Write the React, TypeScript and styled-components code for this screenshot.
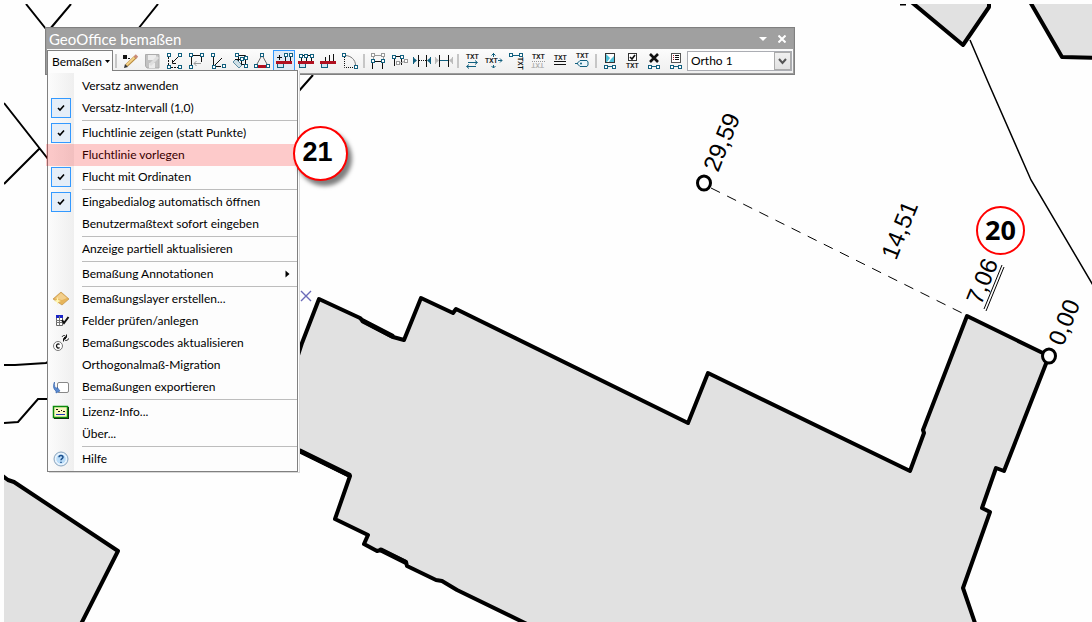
import React from "react";
import styled, { createGlobalStyle, css } from "styled-components";

const TEAL = "#12607f";
const RED = "#b01020";
const UI_FONT = '"Segoe UI", Lato, "Open Sans", sans-serif';

const GlobalStyle = createGlobalStyle`
  *, *::before, *::after { box-sizing: border-box; }
  body { margin: 0; background: #fefefe; color: #000; font-family: ${UI_FONT}; font-size: 12px; }
  button, select, input { font: inherit; color: inherit; }
`;

/* ---------- Map ---------- */

const Desktop = styled.main`
  position: relative;
  min-height: 100vh;
  padding: 4px 0 0 4px;
  overflow: hidden;
`;

const MapCanvas = styled.svg`
  display: block;
  width: 100%;
  height: calc(100vh - 4px);
`;

const Building = styled.path`
  fill: #e1e1e1;
  stroke: #000;
  stroke-width: 4;
  stroke-linejoin: round;
`;

const Boundary = styled.path<{ $w?: number }>`
  fill: none;
  stroke: #000;
  stroke-width: ${(p) => p.$w ?? 2};
`;

const Measure = styled.text`
  font-family: "Liberation Sans", Arial, sans-serif;
  font-size: 24px;
`;

type Label = { text: string; x: number; y: number };
const labels: Label[] = [
  { text: "29,59", x: 718, y: 173 },
  { text: "14,51", x: 896, y: 261 },
  { text: "7,06", x: 981, y: 306 },
  { text: "0,00", x: 1063, y: 347 },
];

const SiteMap = () => (
  <MapCanvas role="img" aria-label="Lageplan">
    <g transform="translate(-4 -4)">
      <Boundary d="M26 4 46 29M71 4 50 29M158 4 138 29M313 75 298 92M4 103 48 159M39 149 4 184M4 365H15L46 363 50 361M4 423 18 422 38 399H50" />
      <Boundary $w={1.5} d="M970 40 988 82 1031 180 1100 297" />
      <Building d="M909 0 963 45 989 7V0" />
      <Building d="M1029 0 1062 57 1100 58V0Z" />
      <Boundary $w={3} d="M900 4H906" />
      <Building d="M0 474 8 480 14 482 118 551 80 626H0Z" />
      <Building d="M290 380 302 343 319 299 360 318 363 321 393 337 404 340 421 298 453 313 456 309 688 423 708 373 910 471 924 433 923 430 967 316 1049 356 1004 471 996 468 982 508 990 512 963 588 976 626H531L457 590 442 581 436 580 407 566 406 562 381 550 377 551 364 544 368 535 335 519 350 476 290 446Z" />
      <Boundary $w={5} strokeLinecap="round" d="M300 451 349 475M381 550 405 562M363 321 392 336" />
      <Boundary $w={1} strokeDasharray="10 8" d="M711 188 966 315" />
      <Boundary $w={1} d="M984 309 1002 265M986 311 1004 267" />
      <path d="M301 291 311 301M311 291 301 301" stroke="#6a6ab8" strokeWidth="1.4" />
      <ellipse cx="704" cy="183" rx="6.5" ry="7" fill="#fefefe" stroke="#000" strokeWidth="3" />
      <ellipse cx="1049" cy="356" rx="6.5" ry="7" fill="#fefefe" stroke="#000" strokeWidth="3" />
      {labels.map((l) => (
        <Measure key={l.text} transform={`translate(${l.x} ${l.y}) rotate(-68)`}>
          {l.text}
        </Measure>
      ))}
    </g>
  </MapCanvas>
);

const Callout = styled.div<{ $x: number; $y: number; $size: number; $raised?: boolean }>`
  position: absolute;
  z-index: 2;
  left: ${(p) => p.$x}px;
  top: ${(p) => p.$y}px;
  width: ${(p) => p.$size}px;
  height: ${(p) => p.$size}px;
  display: flex;
  align-items: center;
  justify-content: center;
  padding-bottom: 3px;
  border: 2px solid #f00;
  border-radius: 50%;
  background: #fff;
  font: bold 27px/1 ${(p) => (p.$raised ? '"Liberation Sans", Arial' : '"Open Sans"')}, sans-serif;
  ${(p) =>
    p.$raised &&
    css`
      padding-right: 6px;
      box-shadow: 4px 5px 4px rgba(0, 0, 0, 0.5);
    `}
`;

/* ---------- Floating toolbar ---------- */

const ToolWindow = styled.section`
  position: absolute;
  z-index: 1;
  left: 45px;
  top: 27px;
  border: 1px solid #808080;
  padding: 1px;
  background: #9c9c9c;
`;

const TitleBar = styled.header`
  display: flex;
  align-items: center;
  justify-content: space-between;
  height: 20px;
  padding: 0 3px 0 2px;
  background: #a0a0a0;
  color: #fff;
`;

const Title = styled.h1`
  margin: 0;
  font-size: 15px;
  line-height: 20px;
  font-weight: 400;
`;

const TitleButtons = styled.div`
  display: flex;
  gap: 3px;
`;

const TitleButton = styled.button`
  display: flex;
  align-items: center;
  justify-content: center;
  width: 16px;
  height: 16px;
  padding: 0;
  border: 0;
  background: none;
`;

const Toolbar = styled.div`
  display: flex;
  align-items: center;
  height: 24px;
  background: linear-gradient(#fcfcfc, #efefef);
`;

const Tool = styled.button<{ $active?: boolean }>`
  display: flex;
  align-items: center;
  justify-content: center;
  width: 22px;
  height: 22px;
  padding: 0;
  border: 1px solid ${(p) => (p.$active ? "#3399ff" : "transparent")};
  background: ${(p) => (p.$active ? "#dfeaf6" : "none")};
`;

const Divider = styled.span`
  width: 2px;
  height: 14px;
  margin: 0 2px;
  background: #c6c6c6;
`;

const MenuAnchor = styled.div`
  position: relative;
  width: 66px;
  height: 22px;
`;

const MenuButton = styled.button`
  position: relative;
  z-index: 2;
  display: flex;
  align-items: center;
  justify-content: space-between;
  width: 100%;
  height: 21px;
  padding: 0 2px 0 4px;
  border: 1px solid #808080;
  border-bottom: 0;
  background: #fdfdfd;
  white-space: nowrap;
`;

const Combo = styled.div`
  position: relative;
  display: flex;
  width: 105px;
  height: 20px;
  margin-right: 1px;
  border: 1px solid #abadb3;
  background: #fff;
`;

const ComboSelect = styled.select`
  appearance: none;
  width: 100%;
  padding: 0 20px 0 3px;
  border: 0;
  background: #fff;
  line-height: 18px;
`;

const ComboArrow = styled.span`
  position: absolute;
  right: 0;
  top: 0;
  display: flex;
  align-items: center;
  justify-content: center;
  width: 17px;
  height: 18px;
  border: 1px solid #ababab;
  background: linear-gradient(#f0f0f0, #e2e2e2);
  pointer-events: none;
`;

const IconSvg = styled.svg`
  display: block;
  flex: none;
  overflow: visible;
`;

const TinyText = styled.text`
  font: 7px "Liberation Mono", monospace;
  stroke: currentColor;
  stroke-width: 0.2;
`;

/* ---------- Menu ---------- */

const Menu = styled.ul`
  position: absolute;
  z-index: 1;
  left: 0;
  top: 20px;
  width: 251px;
  margin: 0;
  padding: 4px 0 1px;
  border: 1px solid #808080;
  background: linear-gradient(90deg, #fcfcfc, #efefef) 0 2px / 26px 100% no-repeat, #fdfdfd;
  box-shadow: 1px 0 0 #fefefe, 2px 1px 0 #d8d8d8;
  list-style: none;
`;

const MenuItem = styled.li<{ $marked?: boolean }>`
  position: relative;
  ${(p) =>
    p.$marked &&
    css`
      &::after {
        content: "";
        position: absolute;
        inset: 0 0 0 -2px;
        background: rgba(255, 0, 0, 0.2);
        pointer-events: none;
      }
    `}
`;

const rowStyle = css`
  display: grid;
  grid-template-columns: 26px 1fr auto;
  column-gap: 8px;
  align-items: center;
  width: 100%;
  height: 22px;
  padding: 0 7px 0 0;
  border: 0;
  background: none;
  text-align: left;
  line-height: 22px;
`;

const ItemButton = styled.button`
  ${rowStyle}
`;

const ItemLabel = styled.label`
  ${rowStyle}
`;

const IconCell = styled.span`
  position: relative;
  display: flex;
  align-items: center;
  justify-content: center;
  height: 22px;
`;

const CheckInput = styled.input`
  appearance: none;
  width: 20px;
  height: 20px;
  margin: 0;
  border: 1px solid #3399ff;
  background: #e5eef8;
`;

const CheckMark = styled.svg`
  position: absolute;
  inset: 0;
  margin: auto;
  pointer-events: none;
`;

const MenuRule = styled.li`
  height: 1px;
  margin: 1px 0 1px 34px;
  background: #bdbdbd;
`;

/* ---------- Icon drawings ---------- */

const Node = ({ x, y, c = TEAL }: { x: number; y: number; c?: string }) => (
  <rect x={x + 0.5} y={y + 0.5} width="3" height="3" fill="#fff" stroke={c} />
);

const Stroke = ({ d, c = "#111", w = 1, dash }: { d: string; c?: string; w?: number; dash?: string }) => (
  <path d={d} fill="none" stroke={c} strokeWidth={w} strokeDasharray={dash} />
);

const Span = () => (
  <>
    <Stroke d="M5 13.500H11" c={TEAL} />
    <Node x={2} y={12} />
    <Node x={10} y={12} />
  </>
);

const BaseBar = () => (
  <>
    <rect x="1.5" y="9.5" width="6" height="5" fill="#cfe6f2" stroke={TEAL} />
    <rect x="0" y="8" width="16" height="3" fill={RED} />
  </>
);

const drawings: Record<string, React.ReactNode> = {
  edit: (
    <>
      <rect x="1" y="2" width="4" height="4" fill="#111" />
      <Stroke d="M6 5.500H8" />
      <Stroke d="M13.500 4 4.500 12.500" c="#b98a3c" w={3.4} />
      <Stroke d="M12.500 4.500 4.500 12" c="#f5d38a" w={1.8} />
      <Stroke d="M15 2.500 13 4.500" c="#c98a78" w={3.4} />
      <path d="M2 15 3 11 6 14Z" fill="#333" />
    </>
  ),
  save: (
    <>
      <path d="M1.500 1.500H15V15H3L1.500 13Z" fill="#c2c2c2" stroke="#acacac" />
      <rect x="4" y="2" width="8" height="5" fill="#ececec" />
      <rect x="5" y="10" width="6" height="5" fill="#ececec" />
      <Stroke d="M14 4 6 12" c="#dedede" w={3} />
    </>
  ),
  dimFree: (
    <>
      <Stroke d="M2.500 4V12M5 14.500H12" dash="2 1" />
      <Stroke d="M12 4 6 10M6.500 7V10.500H10" />
      <Node x={1} y={0} />
      <Node x={12} y={0} />
      <Node x={1} y={12} />
      <Node x={12} y={12} />
    </>
  ),
  dimRect: (
    <>
      <Stroke d="M5 2.500H12M3.500 4V12M13.500 4V9" />
      <Stroke d="M6 10.500H13M8.500 8 6 10.500 8.500 13" c="#999" />
      <Node x={1} y={0} />
      <Node x={12} y={0} />
      <Node x={1} y={12} />
    </>
  ),
  dimAngle: (
    <>
      <Stroke d="M3.500 4V12M5 13.500H11M5 12 12 5" />
      <Node x={1} y={0} />
      <Node x={2} y={12} />
      <Node x={12} y={11} />
    </>
  ),
  dimArea: (
    <>
      <path d="M1 9 4 6 10 12 7 15Z" fill="#cfdfe6" stroke="#5d8fa5" />
      <Stroke d="M5 2.500H13.500V12M6.500 3V8M3 6.500 12 6.500M9.500 8V11.500H13" />
      <Node x={3} y={0} />
      <Node x={12} y={3} />
      <Node x={8} y={4} />
      <Node x={12} y={11} />
    </>
  ),
  triangle: (
    <>
      <Stroke d="M7.500 3 2.500 12M8.500 3 13.500 12" c="#666" />
      <rect x="4" y="12" width="9" height="3" fill={RED} />
      <Node x={6} y={0} />
      <Node x={0} y={11} />
      <Node x={12} y={11} />
    </>
  ),
  orthoAdd: (
    <>
      <BaseBar />
      <Stroke d="M9.500 4V8M14.500 4V8M1 4.500H6M3.500 2V7" />
      <Node x={8} y={0} />
      <Node x={13} y={0} />
    </>
  ),
  orthoChain: (
    <>
      <BaseBar />
      <Stroke d="M3 2.500H14M3.500 4V8M8.500 4V8M13.500 4V8" />
      <Node x={1} y={1} />
      <Node x={6} y={1} />
      <Node x={12} y={1} />
    </>
  ),
  ortho: (
    <>
      <BaseBar />
      <Stroke d="M5.500 4V8M9.500 2V8M13.500 1V8" />
    </>
  ),
  arc: (
    <>
      <Stroke d="M3 2.500C9 2.500 13.500 7 13.500 12" c="#777" />
      <Stroke d="M2.500 4V14.500H12" dash="1 1" />
      <Node x={0} y={0} />
      <Node x={12} y={12} />
    </>
  ),
  parallel: (
    <>
      <Stroke d="M4 2.500H12M3.500 4V7M13.500 4V7" c="#999" />
      <Stroke d="M2.500 9V16M12.500 9V16M4 8.500H12" />
      <Node x={1} y={0} c="#999" />
      <Node x={11} y={0} c="#999" />
      <Node x={1} y={6} />
      <Node x={11} y={6} />
    </>
  ),
  parallelShift: (
    <>
      <Stroke d="M2.500 5V13M9.500 5V12M3 3.500H9" />
      <Stroke d="M5 11 14 8" c="#999" />
      <Node x={0} y={2} />
      <Node x={8} y={2} />
      <Node x={4} y={8} c="#999" />
      <Node x={12} y={6} c="#999" />
    </>
  ),
  extentOut: (
    <>
      <Stroke d="M-0.500 4V11M16.500 4V11" c={TEAL} />
      <path d="M3 7.500 0 5V10ZM13 7.500 16 5V10Z" fill={TEAL} />
      <Stroke d="M4.500 2V14M12.500 2V14" />
      <Stroke d="M5 7.500H12" dash="1 1" />
    </>
  ),
  extentIn: (
    <>
      <Stroke d="M-0.500 4V11M16.500 4V11" c="#bbb" />
      <path d="M3 7.500 0 5V10ZM13 7.500 16 5V10Z" fill="#bbb" />
      <Stroke d="M3.500 2V14M12.500 2V14" />
      <Stroke d="M4 7.500H12" c={TEAL} />
    </>
  ),
  txtSwap: (
    <>
      <TinyText x="2" y="6">TXT</TinyText>
      <Stroke d="M4 9.500H13M11 7.500 13.500 9.500 11 11.500M3 13.500H12M5 11.500 2.500 13.500 5 15.500" c={TEAL} />
    </>
  ),
  txtMove: (
    <>
      <TinyText x="-1" y="10">TXT</TinyText>
      <Stroke d="M7.500 0V4M5.500 2.500 7.500 0.500 9.500 2.500M7.500 12V15M5.500 13 7.500 15 9.500 13M12 7.500H16M14 5.500 16 7.500 14 9.500" c={TEAL} />
    </>
  ),
  txtTurn: (
    <>
      <Stroke d="M4 2.500H11" c={TEAL} />
      <Node x={1} y={0} />
      <Node x={11} y={0} />
      <TinyText transform="translate(10 4) rotate(90)">TXT</TinyText>
    </>
  ),
  txtMirror: (
    <>
      <TinyText x="2" y="6">TXT</TinyText>
      <Stroke d="M2 8.500H15" c="#999" dash="1 1" />
      <TinyText transform="translate(14 10) rotate(180)" fill="#aaa" color="#aaa">TXT</TinyText>
    </>
  ),
  txtUnderline: (
    <>
      <TinyText x="2" y="7">TXT</TinyText>
      <Stroke d="M2 8.500H14M2 11.500H14" />
    </>
  ),
  txtTag: (
    <>
      <TinyText x="2" y="5">TXT</TinyText>
      <path d="M6 7.500H13L14 9V12L13 13.500H6L3 10.500Z" fill="#eaf5fa" stroke={TEAL} />
      <circle cx="7" cy="10.500" r="1" fill={TEAL} />
      <Stroke d="M1 10.500H4" c={TEAL} />
    </>
  ),
  layerSelect: (
    <>
      <rect x="3.500" y="0.500" width="9" height="9" fill="#fff" stroke="#333" />
      <path d="M4 1 8 5 5 9H4ZM9 6 12 3V9H7Z" fill="#4fc0d8" />
      <Span />
    </>
  ),
  txtCheck: (
    <>
      <rect x="4.500" y="0.500" width="8" height="7" fill="#fff" stroke="#333" />
      <Stroke d="M6 4 8 6 11 2" w={1.6} />
      <TinyText x="2" y="15">TXT</TinyText>
    </>
  ),
  remove: (
    <>
      <Stroke d="M4 1 12 9M12 1 4 9" w={2.6} />
      <Span />
    </>
  ),
  report: (
    <>
      <rect x="3.500" y="0.500" width="9" height="9" fill="#fff" stroke="#555" />
      <Stroke d="M5 2.500H6M5 4.500H6M5 6.500H6" c={RED} />
      <Stroke d="M7 2.500H11M7 4.500H11M7 6.500H11" />
      <Span />
    </>
  ),
  layer: (
    <>
      <path d="M0 8 8 1 16 8 9 14Z" fill="#e6b45a" stroke="#b98738" strokeWidth="0.600" />
      <path d="M2 7.500 8 2 14 7 9 9Z" fill="#f3cf8c" />
      <path d="M4.500 6 5.300 9 8 10 5.300 11 4.500 14 3.700 11 1 10 3.700 9Z" fill="#fff6b0" />
    </>
  ),
  fields: (
    <>
      <path d="M3.500 2.500H9.500V12.500H3.500Z" fill="#fff" stroke="#666" />
      <rect x="3" y="2" width="7" height="3" fill="#1a24c8" />
      <Stroke d="M3 7.500H10M3 9.500H10M6.500 3V12" c="#777" />
      <Stroke d="M9 7 11 10 15.500 4" w={2} />
    </>
  ),
  codes: (
    <>
      <circle cx="5" cy="11" r="4.500" fill="#fff" stroke="#777" />
      <Stroke d="M6.500 9.500C4.500 8 3.500 10 3.500 11S5 14 6.500 12.500" w={1.3} />
      <Stroke d="M9 2C10 0 12 0 13 2M13.500 -0.500V2.500H11M15.500 3.500C15 6 12 6 11 4M10.500 6.500V3.500H13" />
    </>
  ),
  exportTo: (
    <>
      <rect x="4.500" y="3.500" width="11" height="10" rx="1.500" fill="#fff" stroke="#888" />
      <path d="M1.500 3C1 7 2 9 4 10V8L7 12 3 14V12C0 10 0 6 1.500 3Z" fill="#5b8bd0" stroke="#2a5ba8" strokeWidth="0.600" />
    </>
  ),
  license: (
    <>
      <rect x="1" y="3" width="15" height="12" fill="#111" />
      <rect x="0.500" y="2.500" width="14" height="11" fill="#fbf8c0" stroke="#0b8a0b" strokeWidth="1.500" />
      <Stroke d="M3 5.500H5M5 7.500H7M8 6.500H9M10 7.500H12" />
      <Stroke d="M3 10.500H12" c="#2233bb" />
    </>
  ),
  help: (
    <>
      <circle cx="8" cy="8" r="7" fill="#dcecfa" stroke="#8ba6bf" />
      <circle cx="8" cy="8" r="5.300" fill="#b9dcf8" stroke="#fff" strokeWidth="0.800" />
      <Stroke d="M6 6.300C6 3.800 10 3.800 10 6.300 10 7.800 8 7.600 8 9.300M8 10.700V12" c="#1d4f8c" w={1.5} />
    </>
  ),
};

const Icon = ({ name }: { name: string }) => (
  <IconSvg width="16" height="16" viewBox="0 0 16 16" aria-hidden="true">
    {drawings[name]}
  </IconSvg>
);

/* ---------- Data ---------- */

type ToolDef = [icon: string, label: string];
const toolGroups: ToolDef[][] = [
  [
    ["edit", "Bearbeiten"],
    ["save", "Speichern"],
    ["dimFree", "Freie Bemaßung"],
    ["dimRect", "Rechtwinklige Bemaßung"],
    ["dimAngle", "Winkelbemaßung"],
    ["dimArea", "Flächenbemaßung"],
    ["triangle", "Dreieck"],
    ["orthoAdd", "Orthogonalmaß ergänzen"],
    ["orthoChain", "Orthogonalmaß Kette"],
    ["ortho", "Orthogonalmaß"],
    ["arc", "Bogenmaß"],
  ],
  [
    ["parallel", "Parallelmaß"],
    ["parallelShift", "Parallelmaß verschieben"],
    ["extentOut", "Maß außen"],
    ["extentIn", "Maß innen"],
  ],
  [
    ["txtSwap", "Text tauschen"],
    ["txtMove", "Text verschieben"],
    ["txtTurn", "Text drehen"],
    ["txtMirror", "Text spiegeln"],
    ["txtUnderline", "Text unterstreichen"],
    ["txtTag", "Text beschriften"],
  ],
  [
    ["layerSelect", "Layer wählen"],
    ["txtCheck", "Text prüfen"],
    ["remove", "Löschen"],
    ["report", "Protokoll"],
  ],
];

type Entry = { text: string; icon?: string; checked?: boolean; marked?: boolean; submenu?: boolean };
const menuGroups: Entry[][] = [
  [{ text: "Versatz anwenden" }, { text: "Versatz-Intervall (1,0)", checked: true }],
  [
    { text: "Fluchtlinie zeigen (statt Punkte)", checked: true },
    { text: "Fluchtlinie vorlegen", marked: true },
    { text: "Flucht mit Ordinaten", checked: true },
  ],
  [{ text: "Eingabedialog automatisch öffnen", checked: true }, { text: "Benutzermaßtext sofort eingeben" }],
  [{ text: "Anzeige partiell aktualisieren" }],
  [{ text: "Bemaßung Annotationen", submenu: true }],
  [
    { text: "Bemaßungslayer erstellen...", icon: "layer" },
    { text: "Felder prüfen/anlegen", icon: "fields" },
    { text: "Bemaßungscodes aktualisieren", icon: "codes" },
    { text: "Orthogonalmaß-Migration" },
    { text: "Bemaßungen exportieren", icon: "exportTo" },
  ],
  [{ text: "Lizenz-Info...", icon: "license" }, { text: "Über..." }],
  [{ text: "Hilfe", icon: "help" }],
];

const MenuEntry = ({ entry }: { entry: Entry }) => (
  <MenuItem $marked={entry.marked}>
    {entry.checked ? (
      <ItemLabel>
        <IconCell>
          <CheckInput type="checkbox" defaultChecked />
          <CheckMark width="8" height="8" viewBox="0 0 8 8">
            <path d="M1 4 3 6 7 1.500" fill="none" stroke="#000" strokeWidth="1.600" />
          </CheckMark>
        </IconCell>
        <span>{entry.text}</span>
      </ItemLabel>
    ) : (
      <ItemButton type="button">
        <IconCell>{entry.icon && <Icon name={entry.icon} />}</IconCell>
        <span>{entry.text}</span>
        {entry.submenu && (
          <svg width="5" height="8" viewBox="0 0 5 8" aria-hidden="true">
            <path d="M0.500 0.500 4.500 4 0.500 7.500Z" />
          </svg>
        )}
      </ItemButton>
    )}
  </MenuItem>
);

export default function App() {
  return (
    <Desktop>
      <GlobalStyle />
      <SiteMap />
      <ToolWindow>
        <TitleBar>
          <Title>GeoOffice bemaßen</Title>
          <TitleButtons>
            <TitleButton type="button" aria-label="Optionen">
              <svg width="8" height="4" viewBox="0 0 8 4">
                <path d="M0 0H8L4 4Z" fill="#fff" />
              </svg>
            </TitleButton>
            <TitleButton type="button" aria-label="Schließen">
              <svg width="8" height="8" viewBox="0 0 8 8">
                <path d="M0.500 0.500 7.500 7.500M7.500 0.500 0.500 7.500" stroke="#fff" strokeWidth="2" />
              </svg>
            </TitleButton>
          </TitleButtons>
        </TitleBar>
        <Toolbar>
          <MenuAnchor>
            <MenuButton type="button" aria-expanded="true">
              Bemaßen
              <svg width="5" height="3" viewBox="0 0 5 3" aria-hidden="true">
                <path d="M0 0H5L2.500 3Z" />
              </svg>
            </MenuButton>
            <Menu>
              {menuGroups.map((group, i) => (
                <React.Fragment key={i}>
                  {i > 0 && <MenuRule role="separator" />}
                  {group.map((entry) => (
                    <MenuEntry key={entry.text} entry={entry} />
                  ))}
                </React.Fragment>
              ))}
            </Menu>
          </MenuAnchor>
          {toolGroups.map((group, i) => (
            <React.Fragment key={i}>
              <Divider />
              {group.map(([icon, label]) => (
                <Tool key={icon} type="button" aria-label={label} $active={icon === "orthoAdd"}>
                  <Icon name={icon} />
                </Tool>
              ))}
            </React.Fragment>
          ))}
          <Combo>
            <ComboSelect aria-label="Bemaßungsart" defaultValue="Ortho 1">
              <option>Ortho 1</option>
            </ComboSelect>
            <ComboArrow>
              <svg width="9" height="7" viewBox="0 0 9 7">
                <path d="M1 1 4.500 5 8 1" fill="none" stroke="#555" strokeWidth="2" />
              </svg>
            </ComboArrow>
          </Combo>
        </Toolbar>
      </ToolWindow>
      <Callout $x={293} $y={126} $size={55} $raised>
        21
      </Callout>
      <Callout $x={976} $y={206} $size={49}>
        20
      </Callout>
    </Desktop>
  );
}
